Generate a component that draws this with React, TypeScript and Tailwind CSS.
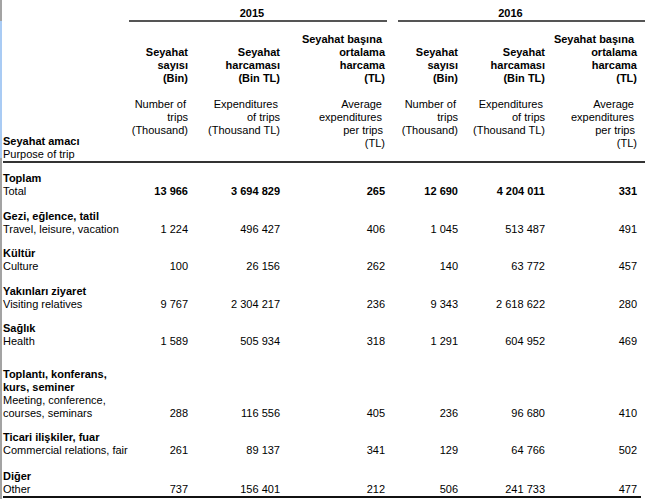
import React from "react";

const COLS = "grid grid-cols-[126px_59px_92px_105px_73px_87px_92px]";

type L = { t: string; pr?: string };

const trHead: L[][] = [
  [{ t: "Seyahat" }, { t: "sayısı" }, { t: "(Bin)" }],
  [{ t: "Seyahat" }, { t: "harcaması" }, { t: "(Bin TL)" }],
  [{ t: "Seyahat başına", pr: "pr-[3px]" }, { t: "ortalama" }, { t: "harcama" }, { t: "(TL)" }],
];
const enHead: L[][] = [
  [{ t: "Number of", pr: "pr-[2px]" }, { t: "trips" }, { t: "(Thousand)" }],
  [{ t: "Expenditures", pr: "pr-[2px]" }, { t: "of trips" }, { t: "(Thousand TL)" }],
  [
    { t: "Average", pr: "pr-[3px]" },
    { t: "expenditures", pr: "pr-[3px]" },
    { t: "per trips", pr: "pr-[2px]" },
    { t: "(TL)" },
  ],
];

type Row = { tr: string[]; en: string[]; vals: string[]; bold?: boolean; mt: string; enMt?: string };

const rows: Row[] = [
  { tr: ["Toplam"], en: ["Total"], vals: ["13 966", "3 694 829", "265", "12 690", "4 204 011", "331"], bold: true, mt: "mt-[9px]" },
  { tr: ["Gezi, eğlence, tatil"], en: ["Travel, leisure, vacation"], vals: ["1 224", "496 427", "406", "1 045", "513 487", "491"], mt: "mt-[12px]" },
  { tr: ["Kültür"], en: ["Culture"], vals: ["100", "26 156", "262", "140", "63 772", "457"], mt: "mt-[11px]" },
  { tr: ["Yakınları ziyaret"], en: ["Visiting relatives"], vals: ["9 767", "2 304 217", "236", "9 343", "2 618 622", "280"], mt: "mt-[12px]" },
  { tr: ["Sağlık"], en: ["Health"], vals: ["1 589", "505 934", "318", "1 291", "604 952", "469"], mt: "mt-[11px]" },
  {
    tr: ["Toplantı, konferans,", "kurs, seminer"],
    en: ["Meeting, conference,", "courses, seminars"],
    vals: ["288", "116 556", "405", "236", "96 680", "410"],
    mt: "mt-[20px]",
  },
  { tr: ["Ticari ilişkiler, fuar"], en: ["Commercial relations, fair"], vals: ["261", "89 137", "341", "129", "64 766", "502"], mt: "mt-[11px]" },
  { tr: ["Diğer"], en: ["Other"], vals: ["737", "156 401", "212", "506", "241 733", "477"], mt: "mt-[13px]" },
];

function HeadCol({ tr, en }: { tr: L[]; en: L[] }) {
  return (
    <div className="flex flex-col items-end pt-[11px]">
      <div className="flex h-[52px] flex-col items-end justify-end font-bold">
        {tr.map((l, i) => (
          <div key={i} className={`whitespace-nowrap ${l.pr ?? ""}`}>
            {l.t}
          </div>
        ))}
      </div>
      <div className="mt-[13px] flex flex-col items-end">
        {en.map((l, i) => (
          <div key={i} className={`whitespace-nowrap ${l.pr ?? ""}`}>
            {l.t}
          </div>
        ))}
      </div>
    </div>
  );
}

export default function App() {
  const heads = [0, 1, 2, 0, 1, 2];
  return (
    <div
      className="flex h-[499px] w-[645px] overflow-hidden bg-white text-[11px] leading-[13px] text-black"
      style={{ fontFamily: '"Liberation Sans", Arial, Helvetica, sans-serif' }}
    >
      <div className="flex w-[2px] flex-col">
        <div className="h-[21px] bg-[#a3a3a3]" />
        <div className="h-[137px] bg-[#a9cbf4]" />
        <div className="flex-1 bg-[#a3a3a3]" />
      </div>
      <div className="flex flex-1 flex-col pl-[1px]">
        {/* Year header */}
        <div className="flex h-[22px]">
          <div className="w-[126px]" />
          <div className="w-[258px] border-b-2 border-[#555] pr-[12px] pt-[7px] text-center font-bold">2015</div>
          <div className="w-[11px]" />
          <div className="flex-1 border-b-2 border-[#555] pr-[22px] pt-[7px] text-center font-bold">2016</div>
        </div>
        {/* Column header */}
        <div className={`${COLS} h-[141px] border-b-2 border-[#333]`}>
          <div className="flex flex-col justify-end">
            <div className="font-bold">Seyahat amacı</div>
            <div>Purpose of trip</div>
          </div>
          {heads.map((h, i) => (
            <HeadCol key={i} tr={trHead[h]} en={enHead[h]} />
          ))}
        </div>
        {/* Body */}
        <div className="mr-[4px] border-b-2 border-[#111]">
          {rows.map((r, i) => (
            <div key={i} className={`${COLS} items-end ${r.mt}`}>
              <div className="flex flex-col">
                {r.tr.map((t, j) => (
                  <div key={j} className="whitespace-nowrap font-bold">
                    {t}
                  </div>
                ))}
                <div className={r.enMt ?? ""}>
                  {r.en.map((t, j) => (
                    <div key={j} className="whitespace-nowrap">
                      {t}
                    </div>
                  ))}
                </div>
              </div>
              {r.vals.map((v, j) => (
                <div key={j} className={`whitespace-nowrap text-right ${r.bold ? "font-bold" : ""}`}>
                  {v}
                </div>
              ))}
            </div>
          ))}
        </div>
      </div>
    </div>
  );
}
